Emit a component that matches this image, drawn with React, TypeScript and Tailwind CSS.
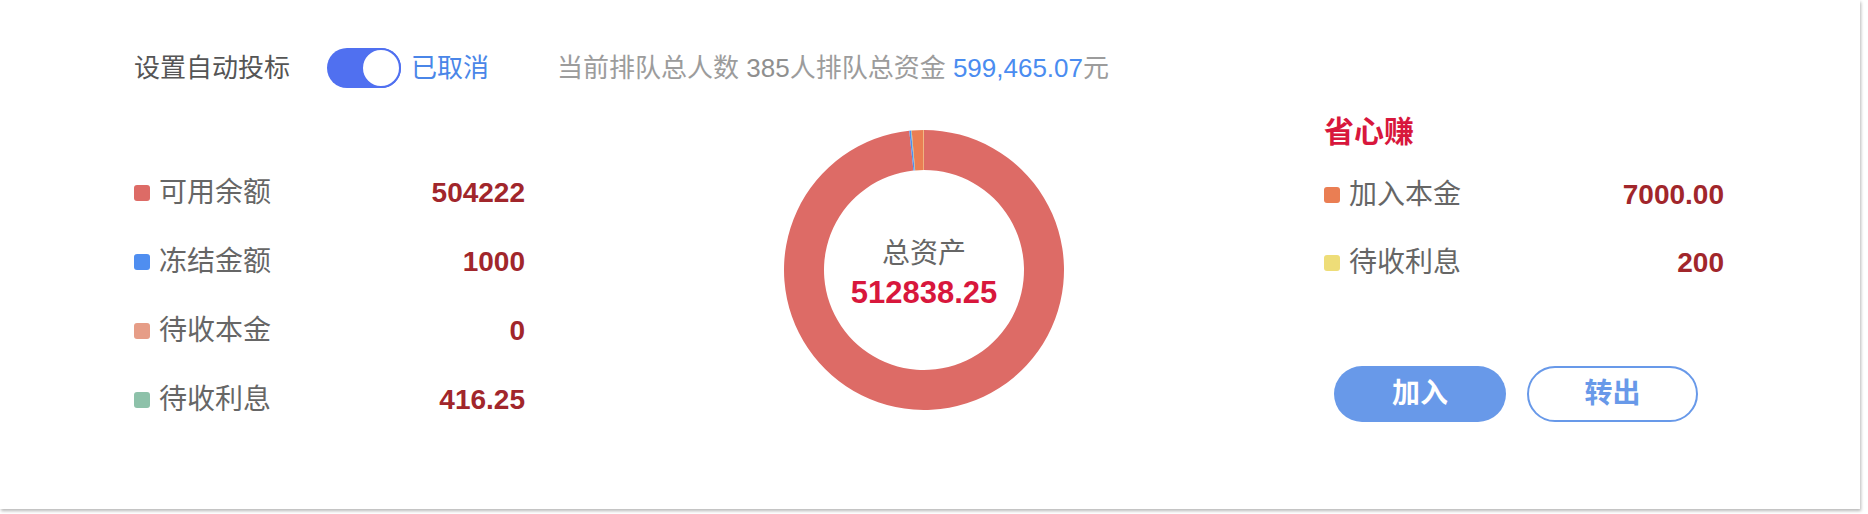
import React from "react";

const FONT = '"Liberation Sans", "Noto Sans CJK SC", sans-serif';

const segs = [
  { v: 504222, c: "#dd6b66" },
  { v: 1000, c: "#4f8ef0" },
  { v: 0, c: "#e69d87" },
  { v: 416.25, c: "#8dc1a9" },
  { v: 7000, c: "#ea7e53" },
  { v: 200, c: "#eedd78" },
];

function Donut() {
  const cx = 140, cy = 140, R = 140, r = 100;
  const total = segs.reduce((s, x) => s + x.v, 0);
  let acc = 0;
  const pt = (rad: number, a: number) => [cx + rad * Math.sin(a), cy - rad * Math.cos(a)];
  const paths = segs.map((s, i) => {
    const a0 = (acc / total) * Math.PI * 2;
    acc += s.v;
    const a1 = (acc / total) * Math.PI * 2;
    if (s.v <= 0) return null;
    const large = a1 - a0 > Math.PI ? 1 : 0;
    const [x0, y0] = pt(R, a0);
    const [x1, y1] = pt(R, a1);
    const [x2, y2] = pt(r, a1);
    const [x3, y3] = pt(r, a0);
    const d = `M ${x0} ${y0} A ${R} ${R} 0 ${large} 1 ${x1} ${y1} L ${x2} ${y2} A ${r} ${r} 0 ${large} 0 ${x3} ${y3} Z`;
    return <path key={i} d={d} fill={s.c} />;
  });
  return (
    <svg width="280" height="280" viewBox="0 0 280 280" className="absolute left-0 top-0">
      {paths}
    </svg>
  );
}

function Row({ color, label, value, h }: { color: string; label: string; value: string; h: string }) {
  return (
    <div className={`flex items-center ${h}`}>
      <div className="w-[16px] h-[16px] rounded-[3px]" style={{ backgroundColor: color }} />
      <span className="ml-[9px] text-[28px] leading-[36px] text-[#666666]">{label}</span>
      <span className="ml-auto text-[28px] leading-[36px] font-bold text-[#a1262b]">{value}</span>
    </div>
  );
}

export default function App() {
  return (
    <div className="w-[1868px] h-[514px] bg-white" style={{ fontFamily: FONT }}>
      <div className="w-[1860px] h-[509px] bg-white shadow-[1px_2px_3px_rgba(0,0,0,0.28)] flex flex-col">
        {/* top row */}
        <div className="h-[100px] pt-[36px] pl-[134px] flex items-center">
          <span className="text-[26px] leading-[34px] text-[#555555]">设置自动投标</span>
          <div className="ml-[37px] w-[74px] h-[40px] rounded-full bg-[#5070f0] flex justify-end">
            <div className="w-[40px] h-[40px] rounded-full bg-white border-2 border-[#5070f0]" />
          </div>
          <span className="ml-[10px] text-[26px] leading-[34px] text-[#4a86e8]">已取消</span>
          <span className="ml-[68px] text-[26px] leading-[34px] text-[#9c9c9c]">
            当前排队总人数 <span className="text-[#8f8f8f]">385</span>人排队总资金 <span className="text-[#4a8cf0]">599,465.07</span>元
          </span>
        </div>

        {/* main row */}
        <div className="flex">
          <div className="ml-[134px] w-[391px] pt-[58px]">
            <Row h="h-[69px]" color="#dd6b66" label="可用余额" value="504222" />
            <Row h="h-[69px]" color="#4f8ef0" label="冻结金额" value="1000" />
            <Row h="h-[69px]" color="#e69d87" label="待收本金" value="0" />
            <Row h="h-[69px]" color="#8dc1a9" label="待收利息" value="416.25" />
          </div>

          <div className="ml-[259px] mt-[30px] w-[280px] h-[280px] relative">
            <Donut />
            <div className="absolute inset-0 flex flex-col items-center justify-center pt-[10px]">
              <span className="text-[28px] leading-[38px] text-[#666666] mt-[-2px]">总资产</span>
              <span className="text-[31px] leading-[40px] font-bold text-[#d8173c]">512838.25</span>
            </div>
          </div>

          <div className="ml-[260px] w-[400px] pt-[12px]">
            <div className="h-[40px] text-[30px] leading-[40px] font-bold text-[#d8173c]">省心赚</div>
            <div className="mt-[9px]">
              <Row h="h-[68px]" color="#ea7e53" label="加入本金" value="7000.00" />
              <Row h="h-[68px]" color="#eedd78" label="待收利息" value="200" />
            </div>
            <div className="mt-[69px] pl-[10px] flex gap-[21px]">
              <button className="w-[172px] h-[56px] rounded-full bg-[#6899e9] text-white text-[28px] font-bold flex items-center justify-center">
                加入
              </button>
              <button className="w-[171px] h-[56px] rounded-full border-2 border-[#6899e9] bg-white text-[#6899e9] text-[28px] font-bold flex items-center justify-center">
                转出
              </button>
            </div>
          </div>
        </div>
      </div>
    </div>
  );
}
